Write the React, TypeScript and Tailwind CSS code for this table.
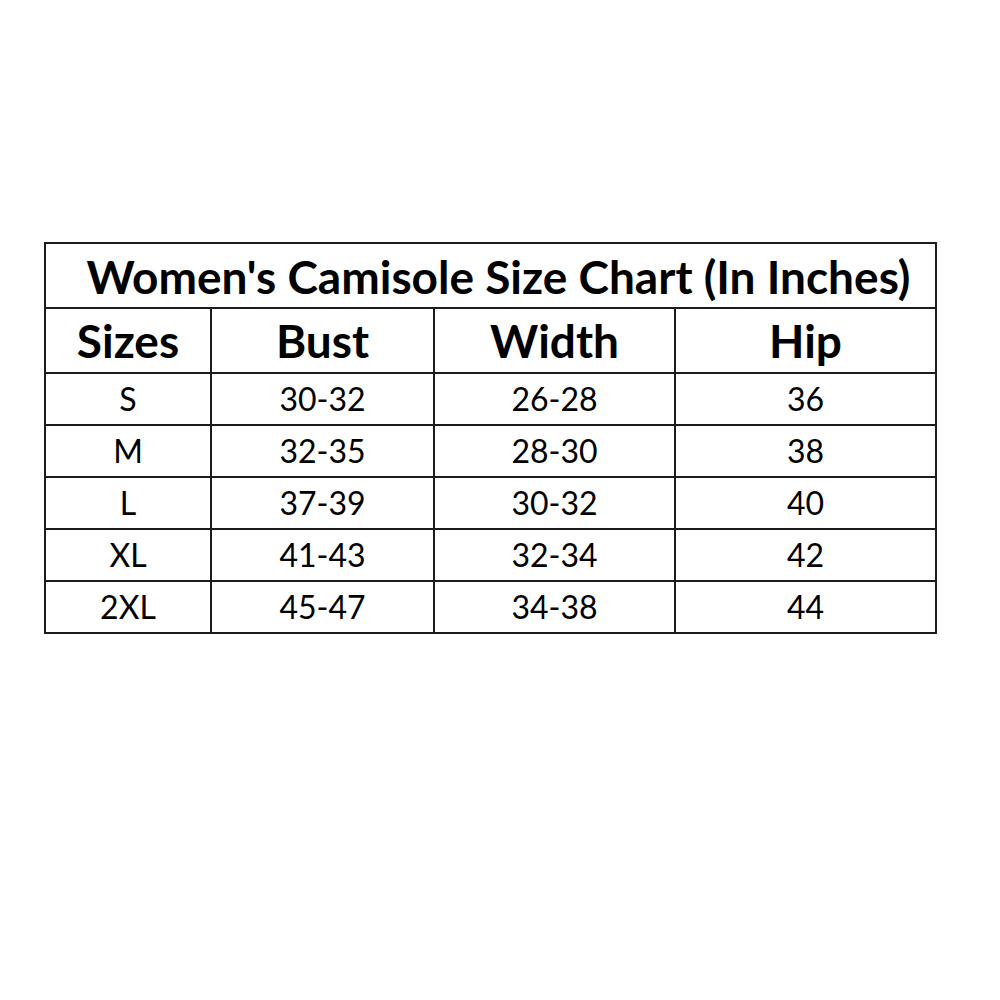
export default function App() {
  const rows = [
    ["S", "30-32", "26-28", "36"],
    ["M", "32-35", "28-30", "38"],
    ["L", "37-39", "30-32", "40"],
    ["XL", "41-43", "32-34", "42"],
    ["2XL", "45-47", "34-38", "44"],
  ];
  const cell = "border-2 border-[#1c1c1c] text-center p-0";
  return (
    <div className="w-[1000px] h-[1000px] bg-white pt-[242px] pl-[44px]" style={{ fontFamily: "Lato, 'Open Sans', sans-serif" }}>
      <table className="border-collapse text-black table-fixed w-[891px]">
        <colgroup>
          <col className="w-[166px]" />
          <col className="w-[223px]" />
          <col className="w-[241px]" />
          <col className="w-[261px]" />
        </colgroup>
        <tbody>
          <tr className="h-[65px]">
            <td colSpan={4} className={`${cell} font-bold text-[46px] pl-[16px] leading-none pt-[3px]`}>
              Women's Camisole Size Chart (In Inches)
            </td>
          </tr>
          <tr className="h-[65px]">
            {["Sizes", "Bust", "Width", "Hip"].map((h) => (
              <td key={h} className={`${cell} font-bold text-[46px] leading-none`}>{h}</td>
            ))}
          </tr>
          {rows.map((r) => (
            <tr key={r[0]} className="h-[52px]">
              {r.map((v, i) => (
                <td key={i} className={`${cell} text-[32px] leading-none`}>{v}</td>
              ))}
            </tr>
          ))}
        </tbody>
      </table>
    </div>
  );
}
